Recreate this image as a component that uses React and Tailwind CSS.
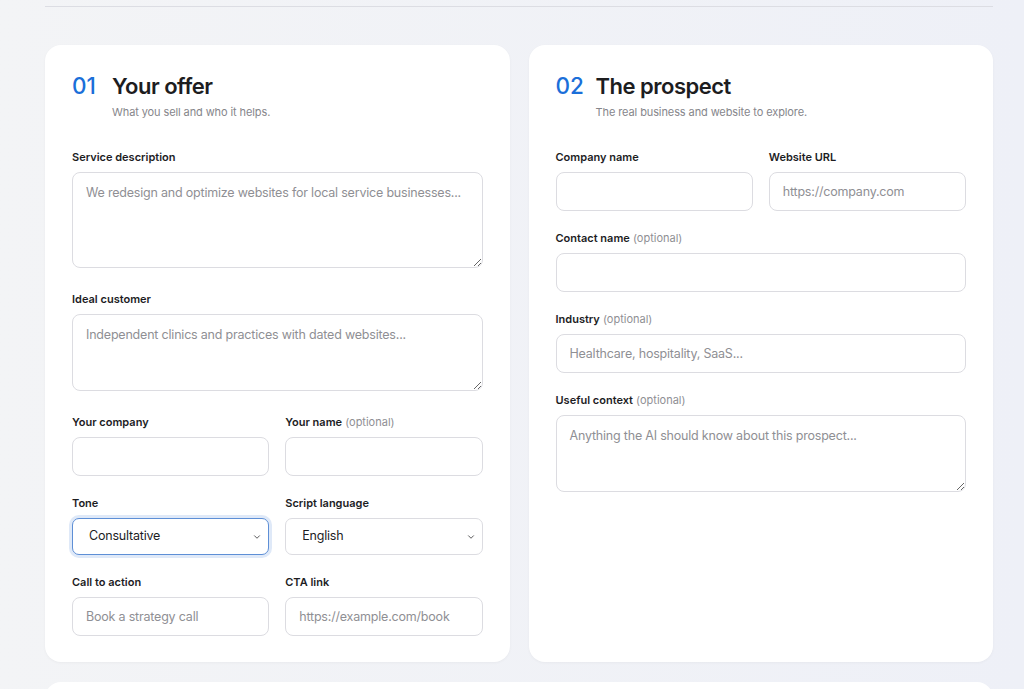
import { ChevronDown } from 'lucide-react';

const inputCls =
    'block w-full h-[39px] rounded-[8px] border border-[#dcdce1] bg-white px-[13px] text-[12.5px] tracking-[-0.2px] text-[#1d1d1f] placeholder:text-[#8f8f94] outline-none';
const areaCls =
    'block w-full rounded-[8px] border border-[#dcdce1] bg-white px-[13px] pt-[11px] text-[12.5px] tracking-[-0.2px] text-[#1d1d1f] placeholder:text-[#8f8f94] outline-none resize-y mb-[4px]';

function Label({ text, optional }) {
    return (
        <label className="block mb-[8px] text-[11px] leading-[14px] font-semibold text-[#1d1d1f]">
            {text}
            {optional && <span className="font-normal text-[#8f8f94]"> (optional)</span>}
        </label>
    );
}

function Field({ label, optional, placeholder }) {
    return (
        <div>
            <Label text={label} optional={optional} />
            <input className={inputCls} placeholder={placeholder} />
        </div>
    );
}

function Area({ label, optional, placeholder, h }) {
    return (
        <div>
            <Label text={label} optional={optional} />
            <textarea className={`${areaCls} ${h}`} placeholder={placeholder} />
        </div>
    );
}

function Select({ label, value, focused }) {
    return (
        <div>
            <Label text={label} />
            <div
                className={
                    'relative flex items-center h-[37px] rounded-[7px] bg-white border ' +
                    (focused
                        ? 'border-[#5e8fd6] ring-[3px] ring-[#dfe9f8]'
                        : 'border-[#dcdce1]')
                }
            >
                <span className="pl-[16px] text-[12.5px] tracking-[-0.2px] text-[#1d1d1f]">{value}</span>
                <ChevronDown className="absolute right-[6px] w-[10px] h-[10px] text-[#3a3a3c]" strokeWidth={2} />
            </div>
        </div>
    );
}

function CardHeader({ num, title, sub }) {
    return (
        <div className="mb-[30px]">
            <div className="flex items-baseline">
                <span className="w-[40px] text-[22.5px] leading-[30px] font-medium text-[#1b6fd9]">{num}</span>
                <h2 className="text-[22px] leading-[30px] font-semibold tracking-[-0.5px] text-[#1d1d1f]">{title}</h2>
            </div>
            <p className="mt-[3px] pl-[40px] text-[11px] leading-[16px] tracking-[-0.1px] text-[#86868b]">{sub}</p>
        </div>
    );
}

export default function App() {
    return (
        <div
            className="min-h-[689px] bg-gradient-to-r from-[#f3f4f6] to-[#eef0f7] pl-[45px] pr-[31px] overflow-hidden"
            style={{ fontFamily: 'Inter, "Noto Sans", sans-serif' }}
        >
            <div className="h-[6px]" />
            <div className="border-t border-[#dcdde3]" />

            <div className="mt-[38px] grid grid-cols-2 gap-[19px]">
                <section className="rounded-[16px] bg-white px-[27px] pt-[26px] pb-[26px] shadow-[0_1px_3px_rgba(0,0,0,0.04)]">
                    <CardHeader num="01" title="Your offer" sub="What you sell and who it helps." />
                    <div className="flex flex-col gap-[20px]">
                        <Area
                            label="Service description"
                            placeholder="We redesign and optimize websites for local service businesses..."
                            h="h-[96px]"
                        />
                        <Area
                            label="Ideal customer"
                            placeholder="Independent clinics and practices with dated websites..."
                            h="h-[77px]"
                        />
                        <div className="grid grid-cols-2 gap-[16px]">
                            <Field label="Your company" />
                            <Field label="Your name" optional />
                        </div>
                        <div className="grid grid-cols-2 gap-[16px]">
                            <Select label="Tone" value="Consultative" focused />
                            <Select label="Script language" value="English" />
                        </div>
                        <div className="grid grid-cols-2 gap-[16px]">
                            <Field label="Call to action" placeholder="Book a strategy call" />
                            <Field label="CTA link" placeholder="https://example.com/book" />
                        </div>
                    </div>
                </section>

                <section className="rounded-[16px] bg-white px-[27px] pt-[26px] pb-[26px] shadow-[0_1px_3px_rgba(0,0,0,0.04)]">
                    <CardHeader num="02" title="The prospect" sub="The real business and website to explore." />
                    <div className="flex flex-col gap-[20px]">
                        <div className="grid grid-cols-2 gap-[16px]">
                            <Field label="Company name" />
                            <Field label="Website URL" placeholder="https://company.com" />
                        </div>
                        <Field label="Contact name" optional />
                        <Field label="Industry" optional placeholder="Healthcare, hospitality, SaaS..." />
                        <Area
                            label="Useful context"
                            optional
                            placeholder="Anything the AI should know about this prospect..."
                            h="h-[77px]"
                        />
                    </div>
                </section>
            </div>

            <div className="mt-[20px] h-[60px] rounded-[16px] bg-white" />
        </div>
    );
}
